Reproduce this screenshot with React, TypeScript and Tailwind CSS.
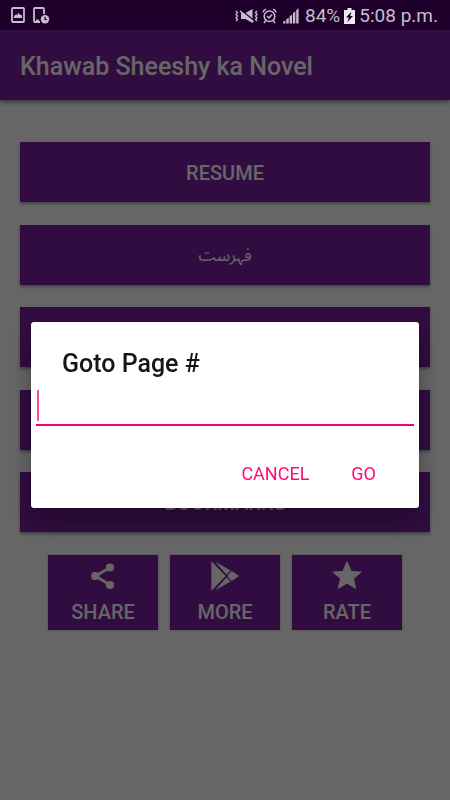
import { useState } from 'react';

const wideButtonClass = 'flex h-[60px] w-full items-center justify-center bg-[#7b1fa2] pt-0.5 text-xl font-medium text-white shadow-[0_2px_3px_rgba(0,0,0,0.35)]';
const tileButtonClass = 'flex h-[75px] w-[110px] flex-col items-center gap-px bg-[#7b1fa2] pt-1 text-xl font-medium text-white shadow-[0_0_2px_rgba(0,0,0,0.35)]';
const dialogButtonClass = 'h-9 px-2 text-lg leading-6 text-[#ff0a78]';

function ScreenshotIcon() {
  return (
    <svg width="14" height="16" viewBox="0 0 14 16" fill="none" stroke="currentColor" strokeWidth="1.8">
      <rect x="1" y="1" width="12" height="14" rx="1" />
      <path d="M3 11V9l2-1.500 1 .6L7.500 6l1.500 1.500 2 1V11z" fill="currentColor" stroke="none" />
    </svg>
  );
}

function PhoneClockIcon() {
  return (
    <svg width="17" height="17" viewBox="0 0 17 17" fill="none" stroke="currentColor" strokeWidth="1.8">
      <path d="M11 7V2a1 1 0 0 0-1-1H2a1 1 0 0 0-1 1v12a1 1 0 0 0 1 1h5" />
      <path d="M3 13.500h3" />
      <circle cx="12" cy="12.300" r="4.200" fill="currentColor" stroke="none" />
      <path d="M12 9.800v2.700h2" stroke="#1f002c" strokeWidth="1.200" />
    </svg>
  );
}

function MutedVibrateIcon() {
  return (
    <svg width="23" height="16" viewBox="0 0 23 16" fill="none" stroke="currentColor" strokeWidth="1.300">
      <path d="M6 5h4.500L17.500 1v14L10.500 11H6z" fill="currentColor" stroke="none" />
      <path d="M6 2l13 10.500" stroke="#1f002c" strokeWidth="1.200" />
      <path d="M5 3l13.500 11" strokeWidth="1.600" />
      <path d="M1 3l1.500 1.700L1 6.400l1.500 1.700L1 9.800l1.500 1.700L1 13" />
      <path d="M22 3l-1.500 1.700L22 6.400l-1.500 1.700L22 9.800l-1.500 1.700L22 13" />
    </svg>
  );
}

function AlarmIcon() {
  return (
    <svg width="15" height="16" viewBox="0 0 15 16" fill="none" stroke="currentColor" strokeWidth="1.500">
      <circle cx="7.500" cy="8.200" r="5.300" />
      <path d="M1 4.300C1.300 2.800 2.500 1.500 4 1.200M14 4.300C13.700 2.800 12.500 1.500 11 1.200M3.800 12.500L2 15M11.200 12.500L13 15" />
      <path d="M5 8l2 2 3.200-3.400" />
    </svg>
  );
}

function SignalIcon() {
  return (
    <svg width="16" height="16" viewBox="0 0 16 16" fill="currentColor">
      <path d="M0 15.500v-1.500l2.400-1.500v3zM3.300 15.500V11.500l2.400-2v6zM6.600 15.500V8.500l2.400-2v9zM9.900 15.500V5.200l2.400-2v12.300zM13.200 15.500V2.200l2.400-2v15.300z" />
    </svg>
  );
}

function BatteryIcon() {
  return (
    <svg width="11" height="16" viewBox="0 0 11 16">
      <path d="M3.500 0h4v2H11v14H0V2h3.500z" fill="#eeeaf0" />
      <path d="M7.500 3.500L2 9.500h2.800L3.500 14 9 8H6.200z" fill="#1f002c" />
    </svg>
  );
}

function ShareIcon() {
  return (
    <svg width="30" height="34" viewBox="0 0 30 34" fill="currentColor">
      <path d="M7.500 17L22 8.500M7.500 17L22 26" stroke="currentColor" strokeWidth="2.700" />
      <circle cx="7.200" cy="17" r="4.100" />
      <circle cx="22" cy="8.500" r="4.100" />
      <circle cx="22" cy="26" r="4.100" />
    </svg>
  );
}

function PlayIcon() {
  return (
    <svg width="30" height="34" viewBox="0 0 30 34" fill="currentColor">
      <path d="M1.300 2L15.600 17 1.300 32z" />
      <path d="M5 2.500L20.500 11.400 16.600 15.800z" />
      <path d="M5 31.500L20.500 22.600 16.600 18.200z" />
      <path d="M21.700 12L29.300 17l-7.600 5-4.400-5z" />
    </svg>
  );
}

function StarIcon() {
  return (
    <svg width="30" height="34" viewBox="0 0 30 34" fill="currentColor" stroke="currentColor" strokeWidth="1.400" strokeLinejoin="round">
      <path d="M15 3.200l3.900 9.200 9.600.8-7.300 6.300 2.200 9.400-8.400-5-8.400 5 2.200-9.400-7.300-6.300 9.600-.8z" />
    </svg>
  );
}

const tiles = [
  { label: 'SHARE', Icon: ShareIcon },
  { label: 'MORE', Icon: PlayIcon },
  { label: 'RATE', Icon: StarIcon },
];

function StatusBar() {
  return (
    <div className="relative z-20 flex h-[30px] items-center bg-[#1f002c] pr-3 pl-[11px] text-[#c6bdca]">
      <div className="flex flex-1 items-center gap-2">
        <ScreenshotIcon />
        <PhoneClockIcon />
      </div>
      <div className="flex items-center gap-1 pt-0.5 text-[19px] leading-6 whitespace-nowrap">
        <MutedVibrateIcon />
        <AlarmIcon />
        <span className="px-0.5"><SignalIcon /></span>
        <span>84%</span>
        <BatteryIcon />
        <span>5:08 p.m.</span>
      </div>
    </div>
  );
}

function GotoDialog() {
  const [page, setPage] = useState('');

  return (
    <div className="fixed inset-0 z-10 flex items-center bg-black/60 px-[31px] pt-[30px]">
      <div role="dialog" aria-labelledby="goto-title" className="w-full rounded-[3px] bg-white shadow-[0_12px_24px_rgba(0,0,0,0.35)]">
        <label id="goto-title" htmlFor="goto-page" className="block px-[31px] pt-[26px] text-[25px] leading-8 font-medium text-[#161616]">
          Goto Page #
        </label>
        <div className="relative mx-[5px] mt-[10px]">
          <input
            id="goto-page"
            type="text"
            inputMode="numeric"
            value={page}
            onChange={e => setPage(e.target.value)}
            className="block h-9 w-full border-b-2 border-[#f50070] text-[22px] text-[#161616] caret-transparent outline-none"
          />
          {page === '' && <span className="absolute top-0 left-px h-[31px] w-[2px] bg-[#ff4c97]" />}
        </div>
        <div className="flex justify-end gap-[26px] px-[35px] pt-[30px] pb-4">
          <button type="button" className={dialogButtonClass}>CANCEL</button>
          <button type="button" className={dialogButtonClass}>GO</button>
        </div>
      </div>
    </div>
  );
}

export default function App() {
  return (
    <div className="min-h-screen bg-white font-[Roboto,'Noto_Sans_Arabic','DejaVu_Sans',sans-serif]">
      <StatusBar />
      <header className="flex h-[70px] items-center bg-[#7b1fa2] px-5 pt-1 shadow-[0_2px_5px_rgba(0,0,0,0.5)]">
        <h1 className="text-[25px] leading-8 font-medium text-white">Khawab Sheeshy ka Novel</h1>
      </header>

      <main className="flex flex-col px-5 pt-[42px]">
        <div className="flex h-[390px] flex-col justify-between">
          <button type="button" className={wideButtonClass}>RESUME</button>
          <button type="button" className={wideButtonClass}>
            <span lang="ur" className="text-[17px] font-normal">فہرست</span>
          </button>
          <button type="button" aria-label="Goto page" className={wideButtonClass} />
          <button type="button" aria-label="Last page" className={wideButtonClass} />
          <button type="button" className={wideButtonClass}>BOOKMARKS</button>
        </div>
        <div className="mt-[23px] flex justify-center gap-3">
          {tiles.map(({ label, Icon }) => (
            <button key={label} type="button" className={tileButtonClass}>
              <Icon />
              <span className="leading-9">{label}</span>
            </button>
          ))}
        </div>
      </main>

      <GotoDialog />
    </div>
  );
}
